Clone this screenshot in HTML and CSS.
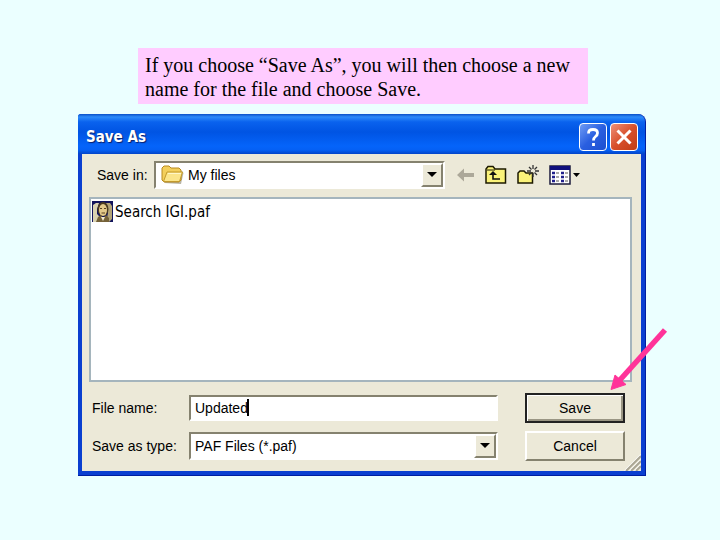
FILE: index.html
```html
<!DOCTYPE html>
<html lang="en">
<head>
    <meta charset="utf-8">
    <title>Save As</title>
    <link rel="stylesheet" href="styles.css">
</head>
<body>
    <main class="slide">
        <p class="note">If you choose “Save As”, you will then choose a new name for the file and choose Save.</p>

        <form class="dialog">
            <header class="titlebar">
                <h1>Save As</h1>
                <button type="button" class="tb-btn help" aria-label="Help">
                    <svg width="26" height="26" viewBox="0 0 26 26"><path d="M8.500 9.500Q8.500 5.500 13 5.500T17.500 9Q17.500 11 15.500 12.500T13.500 16.500M13.500 19V22" fill="none" stroke="#fff" stroke-width="2.800"/></svg>
                </button>
                <button type="button" class="tb-btn close" aria-label="Close">
                    <svg width="26" height="26" viewBox="0 0 26 26"><path d="M6.500 6.500L19.500 19.500M19.500 6.500L6.500 19.500" fill="none" stroke="#fff" stroke-width="3"/></svg>
                </button>
            </header>

            <div class="body">
                <div class="toolbar">
                    <label for="folder">Save in:</label>
                    <div class="combo with-icon">
                        <svg class="combo-icon" width="23" height="20" viewBox="0 0 23 20">
                            <path d="M3 18L20 19L22.500 8L21 6Z" fill="#b9b5a5"/>
                            <path d="M1 15V3L3 1H8L10 3H18L20 5V15L18 17H3Z" fill="#f3cf5b" stroke="#b88a20"/>
                            <path d="M2.500 16.500L6 7H21.500L18.500 16.500Z" fill="#fbe58a" stroke="#c39a2c"/>
                            <path d="M7 8.500H20" stroke="#fff7c8"/>
                        </svg>
                        <select id="folder"><option>My files</option></select>
                        <span class="drop"></span>
                    </div>
                    <div class="tools">
                        <button type="button" class="tool" aria-label="Back">
                            <svg width="18" height="14" viewBox="0 0 18 14"><path d="M0 7L7 0.500V5H17V9H7V13.500Z" fill="#aca899"/></svg>
                        </button>
                        <button type="button" class="tool" aria-label="Up one level">
                            <svg width="22" height="20" viewBox="0 0 22 20">
                                <path d="M1 18V4L3 1.500H8L10 4H20.500V18Z" fill="#fbf37a" stroke="#1c1a00" stroke-width="1.500"/>
                                <path d="M2 5H10" stroke="#1c1a00"/>
                                <path d="M8 8V14H15" fill="none" stroke="#111" stroke-width="1.600"/>
                                <path d="M4 10L8 6L12 10Z" fill="#111"/>
                            </svg>
                        </button>
                        <button type="button" class="tool" aria-label="New folder">
                            <svg width="22" height="22" viewBox="0 0 22 22">
                                <path d="M1 19V9L3 7H7L9 9H15.500V19Z" fill="#fbf37a" stroke="#1c1a00" stroke-width="1.500"/>
                                <path d="M16 1V5M16 9V13M10 7H14M18 7H22M12 3L14.500 5.500M20 3L17.500 5.500M12 11L14.500 8.500M20 11L17.500 8.500" stroke="#333" stroke-width="1.300"/>
                            </svg>
                        </button>
                        <button type="button" class="tool" aria-label="View menu">
                            <svg width="32" height="20" viewBox="0 0 32 20">
                                <rect x="1" y="1" width="20" height="18" fill="#fff" stroke="#1b1b3c" stroke-width="1.500"/>
                                <path d="M1 3H21" stroke="#10107c" stroke-width="4"/>
                                <path d="M3 8H6M3 12H6M3 16H6M12 8H15M12 12H15M12 16H15" stroke="#20208c" stroke-width="2.500"/>
                                <path d="M7 8H10M7 12H10M7 16H10M16 8H19M16 12H19M16 16H19" stroke="#555" stroke-width="1.200"/>
                                <path d="M24 8H31L27.500 12Z" fill="#000"/>
                            </svg>
                        </button>
                    </div>
                </div>

                <ul class="files">
                    <li>
                        <svg width="21" height="21" viewBox="0 0 21 21">
                            <rect width="21" height="21" fill="#12145c"/>
                            <path d="M1 21V4L4 2H7L5 8V13L8 16V21Z" fill="#d9d2b0"/>
                            <path d="M14 2H18L20 5V18L17 21H14L16 12Z" fill="#b3a477"/>
                            <ellipse cx="11" cy="8" rx="5.500" ry="7" fill="#4b3b20"/>
                            <ellipse cx="11" cy="9" rx="4" ry="6" fill="#e3c98a"/>
                            <path d="M8 7.500H10M12 7.500H14M9.500 12H13" stroke="#5a4220"/>
                            <path d="M4 21L6 16L9 14L11 17L14 14L17 17V21Z" fill="#756238"/>
                            <path d="M9 16L11 20L13 16Z" fill="#f4ecd0"/>
                        </svg>
                        <span>Search IGI.paf</span>
                    </li>
                </ul>

                <div class="fields">
                    <label for="filename">File name:</label>
                    <div class="textbox">
                        <input type="text" id="filename" value="Updated">
                        <span class="caret"></span>
                    </div>
                    <button type="submit" class="btn primary">Save</button>

                    <label for="filetype">Save as type:</label>
                    <div class="combo">
                        <select id="filetype"><option>PAF Files (*.paf)</option></select>
                        <span class="drop"></span>
                    </div>
                    <button type="button" class="btn">Cancel</button>
                </div>

                <svg class="grip" width="18" height="18" viewBox="0 0 18 18">
                    <path d="M2 18L18 2M7 18L18 7M12 18L18 12" stroke="#fff" stroke-width="2"/>
                    <path d="M3 18L18 3M8 18L18 8M13 18L18 13" stroke="#aaa694" stroke-width="2"/>
                </svg>
            </div>

            <svg class="pointer" width="60" height="66" viewBox="0 0 60 66">
                <path d="M56 3L10 54" stroke="#ff3399" stroke-width="5.500"/>
                <path d="M2 62.500L6 48L17 57.500Z" fill="#ff3399" stroke="#ff3399" stroke-linejoin="round"/>
            </svg>
        </form>
    </main>
</body>
</html>
```

FILE: styles.css
```css
* { box-sizing: border-box; }
body { margin: 0; background: #ebffff; color: #000; font-family: "Liberation Sans", Arial, sans-serif; font-size: 14px; }
.slide { padding: 48px 74px 64px 78px; }

.note { margin: 0 58px 10px 60px; padding: 5px 7px 3px; background: #ffccff;
        font-family: "Liberation Serif", "Times New Roman", serif; font-size: 20px; line-height: 24px; }

/* window frame */
.dialog { position: relative; margin: 0; padding-bottom: 4px; background: #0a3fd0; border-radius: 3px 8px 0 0;
          border-right: 1px solid #001ea0; border-bottom: 1px solid #001ea0; }
.titlebar { display: flex; align-items: center; gap: 3px; height: 40px; padding: 5px 7px 0 8px; border-radius: 3px 8px 0 0;
            background: linear-gradient(#0a50c8 0, #2c8bfa 3px, #0a62ee 8px, #0054e3 18px, #0564fa 32px, #0560f4 36px, #0344c8 40px); }
.titlebar h1 { flex: 1; margin: 0; color: #fff; font-family: "DejaVu Sans Condensed", "DejaVu Sans", sans-serif;
               font-size: 15px; line-height: 20px; text-shadow: 1px 1px 1px #0a1f6b; }
.tb-btn { width: 28px; height: 28px; padding: 0; border: 1px solid #fff; border-radius: 4px; }
.tb-btn svg { display: block; }
.help { background: linear-gradient(135deg, #6f9cf5, #2a5fe0 50%, #1c4fd0); }
.close { background: linear-gradient(135deg, #ee9078, #d8502c 50%, #c03c14); }

.body { position: relative; margin: 0 4px; padding: 7px 9px 10px 7px; background: #ece9d8; }

/* look-in row */
.toolbar { display: flex; align-items: center; margin-bottom: 8px; padding-left: 8px; }
.toolbar label { width: 57px; }
.toolbar .combo { flex: 1; }
.tools { display: flex; align-items: center; gap: 10px; padding: 0 51px 0 12px; }
.tool { padding: 0; border: 0; background: none; }
.tool svg { display: block; }

.combo, .textbox { position: relative; }
select, input { display: block; width: 100%; height: 28px; margin: 0; padding: 0 4px; border: 2px solid; border-color: #85826f #fff #fff #85826f;
                border-radius: 0; background: #fff; color: #000; font: inherit; appearance: none; outline: none; }
input { height: 26px; }
.with-icon select { padding-left: 32px; }
.combo-icon { position: absolute; left: 7px; top: 4px; }
.drop { position: absolute; top: 2px; right: 2px; bottom: 2px; width: 22px; background: #ece9d8; pointer-events: none;
        border: 2px solid; border-color: #fff #85826f #85826f #fff; }
.drop::after { content: ""; position: absolute; left: 4px; top: 7px; border: 5px solid transparent; border-top-color: #000; border-bottom: 0; }
.caret { position: absolute; left: 58px; top: 4px; width: 2px; height: 17px; background: #000; }

.files { height: 185px; margin: 0 0 11px; padding: 2px 1px; border: 2px solid #a5b5bd; background: #fff; list-style: none; }
.files li { display: flex; align-items: center; gap: 2px; font-family: "DejaVu Sans Condensed", "DejaVu Sans", sans-serif; font-size: 15px; }
.files svg { display: block; }

/* name, type and the two buttons */
.fields { display: grid; grid-template-columns: 97px 1fr 127px; grid-auto-rows: 30px; row-gap: 8px; align-items: center; padding: 0 7px 0 3px; }
.btn { justify-self: end; width: 100px; height: 30px; padding: 0; border: 2px solid; border-color: #fff #85826f #85826f #fff;
       background: #ece9d8; color: #000; font: inherit; }
.primary { border: 2px solid #222; box-shadow: inset 1px 1px #fff, inset -2px -2px #9a9684; }
.grip { position: absolute; right: 0; bottom: 0; }

.pointer { position: absolute; right: -24px; top: 213px; }
```
